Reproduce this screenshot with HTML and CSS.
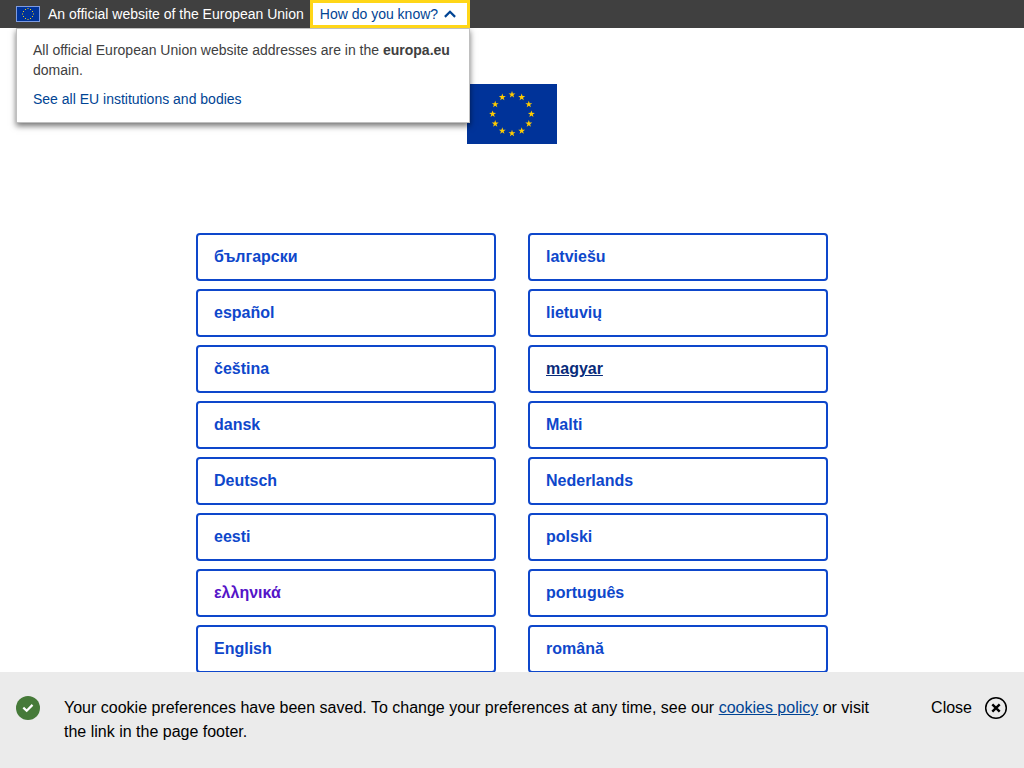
FILE: index.html
```html
<!DOCTYPE html>
<html lang="en">
<head>
<meta charset="utf-8">
<title>European Union</title>
<link rel="stylesheet" href="styles.css">
</head>
<body>
<svg class="defs" aria-hidden="true">
  <defs>
    <polygon id="star" points="0,-3.6 .85,-1.15 3.45,-1.1 1.35,.45 2.1,2.95 0,1.45 -2.1,2.95 -1.35,.45 -3.45,-1.1 -.85,-1.15"/>
    <g id="stars" fill="#fc0">
      <use href="#star" x="45" y="10.6"/>
      <use href="#star" x="54.7" y="13.2"/>
      <use href="#star" x="61.8" y="20.3"/>
      <use href="#star" x="64.4" y="30"/>
      <use href="#star" x="61.8" y="39.7"/>
      <use href="#star" x="54.7" y="46.8"/>
      <use href="#star" x="45" y="49.4"/>
      <use href="#star" x="35.3" y="46.8"/>
      <use href="#star" x="28.2" y="39.7"/>
      <use href="#star" x="25.6" y="30"/>
      <use href="#star" x="28.2" y="20.3"/>
      <use href="#star" x="35.3" y="13.2"/>
    </g>
  </defs>
</svg>

<div class="globan">
  <div class="globan-inner">
    <svg class="globan-flag" viewBox="0 0 24 16" aria-hidden="true">
      <rect width="24" height="16" fill="#7d9be0"/>
      <rect x="1" y="1" width="22" height="14" fill="#039"/>
      <g fill="#e8c81c">
        <rect x="11.5" y="2" width="1" height="1"/><rect x="14" y="3" width="1" height="1"/>
        <rect x="16" y="5" width="1" height="1"/><rect x="17" y="7.5" width="1" height="1"/>
        <rect x="16" y="10" width="1" height="1"/><rect x="14" y="12" width="1" height="1"/>
        <rect x="11.5" y="13" width="1" height="1"/><rect x="9" y="12" width="1" height="1"/>
        <rect x="7" y="10" width="1" height="1"/><rect x="6" y="7.5" width="1" height="1"/>
        <rect x="7" y="5" width="1" height="1"/><rect x="9" y="3" width="1" height="1"/>
      </g>
    </svg>
    <span class="globan-text">An official website of the European Union</span>
    <button class="globan-toggle" type="button" aria-expanded="true" aria-controls="globan-panel">
      <span>How do you know?</span>
      <svg class="chevron" viewBox="0 0 12 8" aria-hidden="true"><path d="M.9 6.9 6 1.8l5.1 5.1" fill="none" stroke="currentColor" stroke-width="2.2"/></svg>
    </button>
    <div class="globan-panel" id="globan-panel">
      <p>All official European Union website addresses are in the <strong>europa.eu</strong> domain.</p>
      <p><a href="#institutions">See all EU institutions and bodies</a></p>
    </div>
  </div>
</div>

<main class="splash">
  <svg class="flag" viewBox="0 0 90 60" role="img" aria-label="European flag">
    <rect width="90" height="60" fill="#039"/>
    <use href="#stars"/>
  </svg>
  <nav class="languages" aria-label="Languages">
    <a class="language" href="#bg" lang="bg">български</a>
    <a class="language" href="#es" lang="es">español</a>
    <a class="language" href="#cs" lang="cs">čeština</a>
    <a class="language" href="#da" lang="da">dansk</a>
    <a class="language" href="#de" lang="de">Deutsch</a>
    <a class="language" href="#et" lang="et">eesti</a>
    <a class="language language-visited" href="#el" lang="el">ελληνικά</a>
    <a class="language" href="#en" lang="en">English</a>
    <a class="language" href="#lv" lang="lv">latviešu</a>
    <a class="language" href="#lt" lang="lt">lietuvių</a>
    <a class="language language-active" href="#hu" lang="hu">magyar</a>
    <a class="language" href="#mt" lang="mt">Malti</a>
    <a class="language" href="#nl" lang="nl">Nederlands</a>
    <a class="language" href="#pl" lang="pl">polski</a>
    <a class="language" href="#pt" lang="pt">português</a>
    <a class="language" href="#ro" lang="ro">română</a>
  </nav>
</main>

<section class="cookies" aria-label="Cookies">
  <svg class="icon" viewBox="0 0 24 24" aria-hidden="true">
    <circle cx="12" cy="12" r="12" fill="#467a39"/>
    <path d="m7.3 11.6 3.4 3.1 5.8-5.8" fill="none" stroke="#fff" stroke-width="2.2"/>
  </svg>
  <p class="cookies-text">Your cookie preferences have been saved. To change your preferences at any time, see our <a href="#cookies">cookies policy</a> or visit the link in the page footer.</p>
  <button class="cookies-close" type="button">
    <span>Close</span>
    <svg class="icon" viewBox="0 0 24 24" aria-hidden="true">
      <circle cx="12" cy="12" r="10.3" fill="none" stroke="#000" stroke-width="1.5"/>
      <path d="m8.3 8.3 7.4 7.4m0-7.4-7.4 7.4" fill="none" stroke="#000" stroke-width="2.4"/>
    </svg>
  </button>
</section>
</body>
</html>
```
FILE: styles.css
```css
* {
  box-sizing: border-box;
}

body {
  margin: 0;
  background: #fff;
  color: #000;
  font: 16px/24px "Liberation Sans", Arial, sans-serif;
}

p {
  margin: 0;
}

.defs {
  position: absolute;
  width: 0;
  height: 0;
}

.globan {
  display: flex;
  padding: 0 16px;
  background: #404040;
  font-size: 14px;
  line-height: 20px;
}

.globan-inner {
  position: relative;
  display: flex;
  align-items: center;
}

.globan-flag {
  flex: none;
  width: 24px;
  height: 16px;
  margin-right: 8px;
}

.globan-text {
  margin-right: 6px;
  color: #fff;
}

.globan-toggle {
  display: flex;
  align-items: center;
  gap: 6px;
  padding: 1px 11px 1px 7px;
  border: 3px solid #ffd617;
  background: #fff;
  color: #004494;
  font: inherit;
  cursor: pointer;
}

.chevron {
  width: 12px;
  height: 8px;
}

.globan-panel {
  position: absolute;
  top: 100%;
  left: 0;
  right: 0;
  display: grid;
  gap: 9px;
  padding: 11px 16px 13px;
  border: 1px solid #bfbfbf;
  background: #fff;
  box-shadow: 0 3px 6px rgba(0, 0, 0, .55);
  clip-path: inset(0 -12px -12px -12px);
  color: #404040;
}

.globan-panel a {
  color: #004494;
  text-decoration: none;
}

.splash {
  display: flex;
  flex-direction: column;
  align-items: center;
  padding: 56px 16px 0;
}

.flag {
  width: 90px;
  height: 60px;
  margin-bottom: 89px;
}

.languages {
  display: grid;
  grid-template-rows: repeat(8, auto);
  grid-auto-flow: column;
  grid-auto-columns: 1fr;
  gap: 8px 32px;
  width: 100%;
  max-width: 632px;
}

.language {
  padding: 10px 16px;
  border: 2px solid #0e47cb;
  border-radius: 4px;
  color: #0e47cb;
  font-weight: bold;
  text-decoration: none;
}

.language-visited {
  color: #5514c8;
}

.language-active {
  color: #082b7a;
  text-decoration: underline;
}

.cookies {
  position: fixed;
  right: 0;
  bottom: 0;
  left: 0;
  display: flex;
  align-items: flex-start;
  padding: 24px 16px;
  background: #ebebeb;
}

.icon {
  flex: none;
  width: 24px;
  height: 24px;
}

.cookies-text {
  flex: 1;
  margin: 0 48px 0 24px;
}

.cookies-text a {
  color: #004494;
}

.cookies-close {
  display: flex;
  gap: 12px;
  padding: 0;
  border: 0;
  background: none;
  color: #000;
  font: inherit;
  cursor: pointer;
}
```
